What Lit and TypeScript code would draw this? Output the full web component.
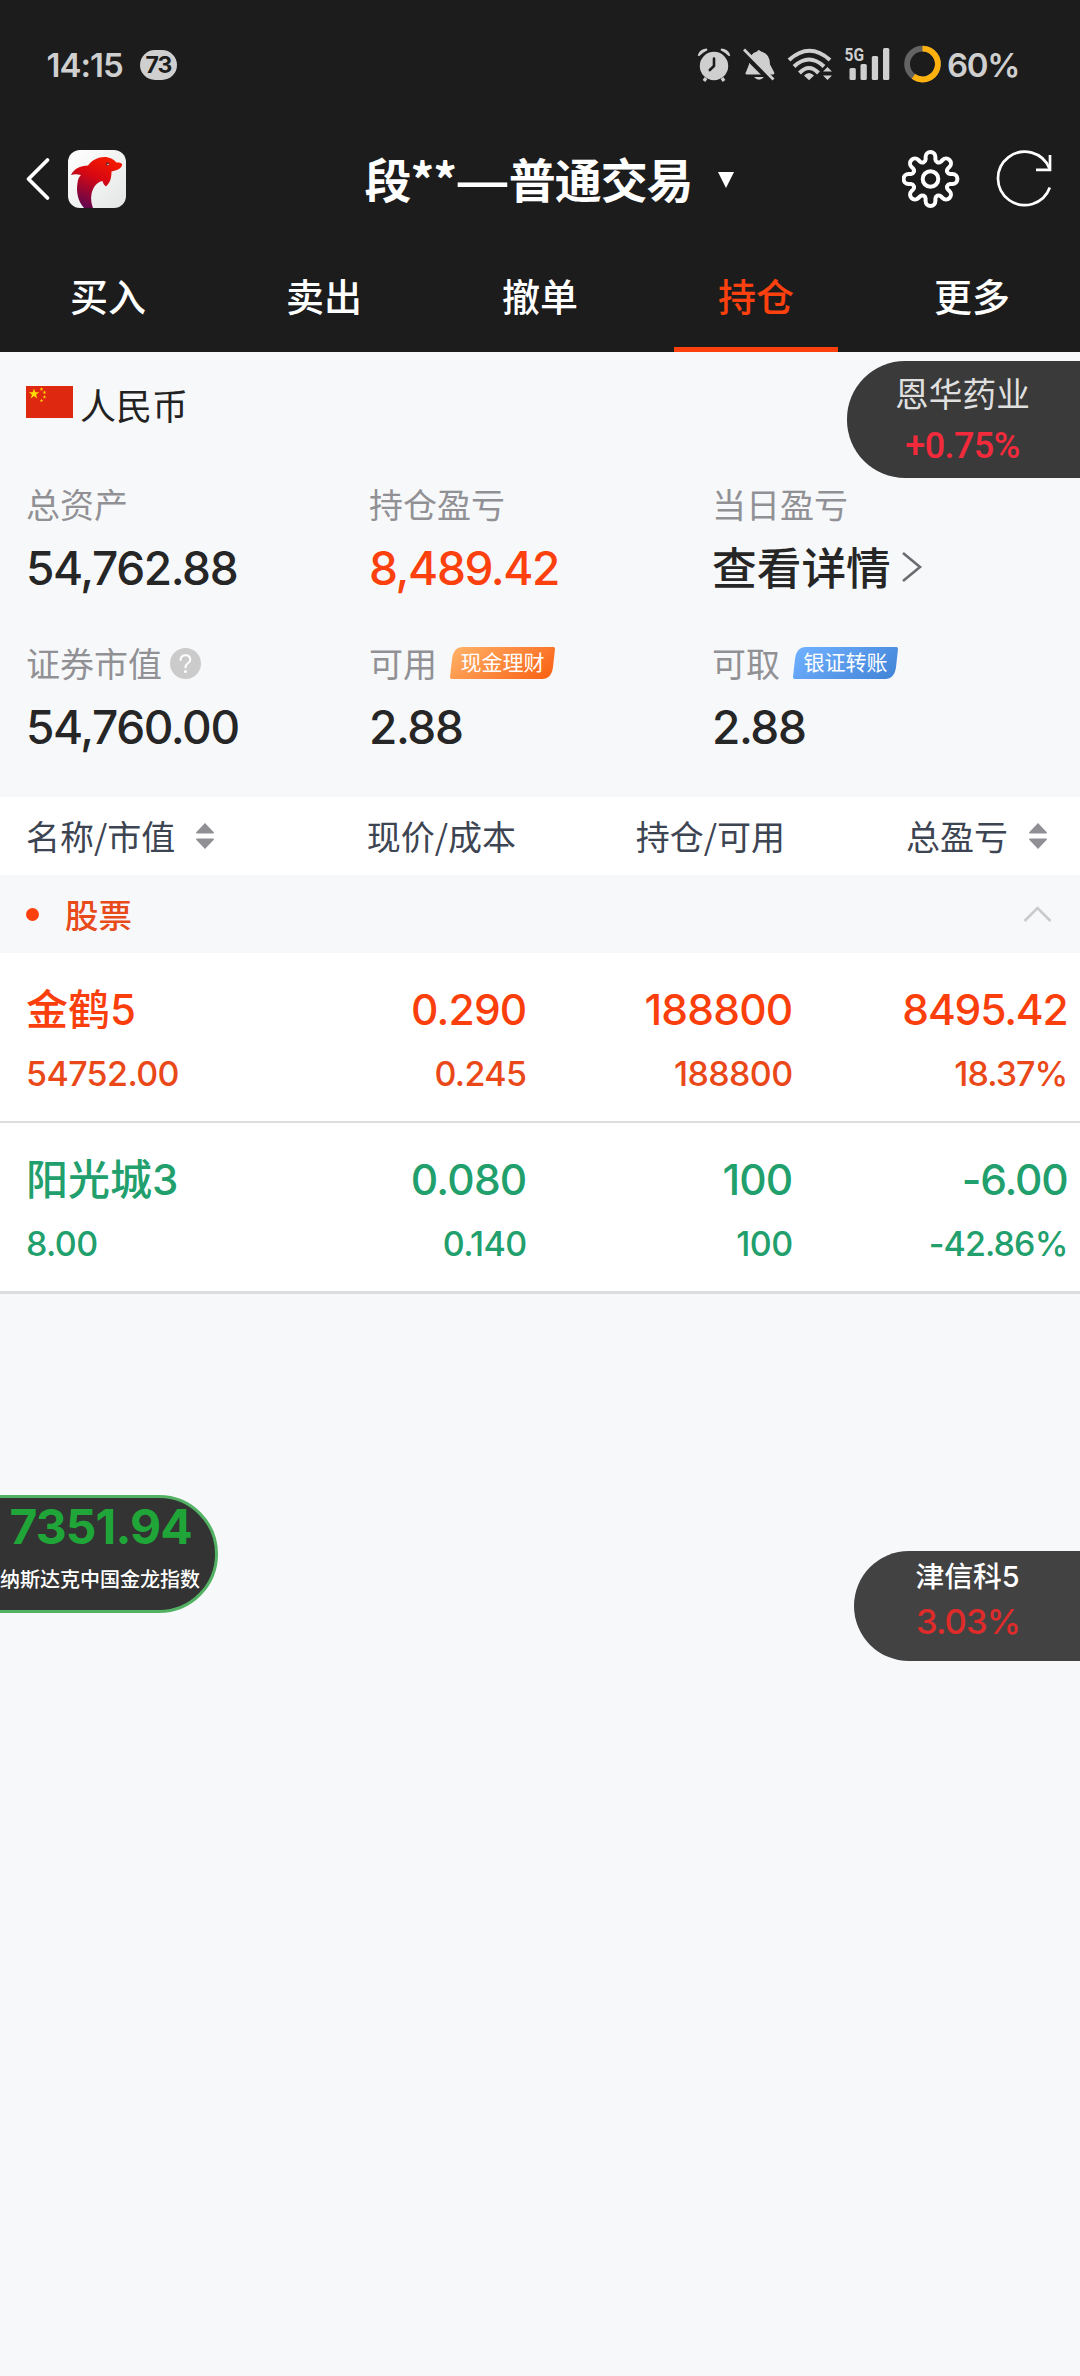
import { LitElement, html, css, svg } from "lit";
import { customElement, property } from "lit/decorators.js";
import { classMap } from "lit/directives/class-map.js";

interface Holding {
  tone: "up" | "down";
  name: string;
  value: string;
  cells: [string, string][];
}

const holdings: Holding[] = [
  { tone: "up", name: "金鹤5", value: "54752.00", cells: [["0.290", "0.245"], ["188800", "188800"], ["8495.42", "18.37%"]] },
  { tone: "down", name: "阳光城3", value: "8.00", cells: [["0.080", "0.140"], ["100", "100"], ["-6.00", "-42.86%"]] },
];

const tabs = ["买入", "卖出", "撤单", "持仓", "更多"];

/* Outline of an eight-lobed cog centred on (0, 0): rounded arms joined by concave valleys. */
function cogPath(half: number, base: number, shoulder: number): string {
  const at = (i: number, x: number, r: number) => {
    const a = (i * Math.PI) / 4;
    return `${(x * Math.cos(a) + r * Math.sin(a)).toFixed(2)} ${(x * Math.sin(a) - r * Math.cos(a)).toFixed(2)}`;
  };
  let d = `M${at(0, -half, base)}`;
  for (let i = 0; i < 8; i++) {
    d += `L${at(i, -half, shoulder)}A${half} ${half} 0 0 1 ${at(i, half, shoulder)}L${at(i, half, base)}A3.3 3.3 0 0 0 ${at(i + 1, -half, base)}`;
  }
  return `${d}Z`;
}

@customElement("status-bar")
export class StatusBar extends LitElement {
  static styles = css`
    :host { display: block; height: 130px; }
    .bar { display: flex; align-items: center; height: 130px; padding: 0 62px 0 46.5px; color: #cfcfcf;
      font: 600 33px/40px Inter, "Noto Sans", sans-serif; }
    .time { letter-spacing: -1px; width: 93.5px; white-space: nowrap; }
    .count { width: 37px; height: 30px; border-radius: 15px; background: #cfcfcf; color: #1c1c1c; text-align: center;
      font-size: 23px; line-height: 30px; font-weight: 700; letter-spacing: -1px; }
    .icons { margin-left: auto; width: 250px; height: 50px; flex: none; }
    .level { letter-spacing: -1.3px; width: 74px; box-sizing: border-box; padding-left: 3px; white-space: nowrap; }
  `;
  render() {
    return html`<div class="bar">
      <span class="time">14:15</span><span class="count">73</span>
      <svg class="icons" viewBox="694 40 250 50" fill="#cfcfcf">
        <circle cx="714" cy="66" r="14.2" />
        <path d="M714 58.500V66l-4.200 4" fill="none" stroke="#1c1c1c" stroke-width="2.600" stroke-linecap="round" />
        <path d="M706 78l-2 3M722 78l2 3" fill="none" stroke="#cfcfcf" stroke-width="3.200" />
        <path d="M698.500 55.500a9 9 0 0 1 8.500-6q-4 2-8.500 6zM729.500 55.500a9 9 0 0 0-8.500-6q4 2 8.500 6z" stroke="#cfcfcf" stroke-width="1.800" />
        <path d="M757 51.500q1.500-3 4 0q9 2 9 13l4 7.500q1 2.500-1 2.500h-26q-2.500 0-1-2.500l3-7.500q0-11 8-13z" />
        <path d="M754 77h10q-5 5.500-10 0z" />
        <path d="M742.500 52l30 30" stroke="#1c1c1c" stroke-width="6" />
        <path d="M744 49.500l29.500 30" stroke="#cfcfcf" stroke-width="2.800" />
        <g fill="none" stroke="#cfcfcf" stroke-width="4">
          <path d="M789 60q20.500-18.500 41 0" /><path d="M794 66.500q15-14 30 0" /><path d="M799.500 73q9.500-10 19 0" />
        </g>
        <path d="M804 75.500q5-5 10 0l-5 4.800z" />
        <path d="M823 71.500l4.500-4.500 4.500 4.500zM823 75.500l4.500 4.500 4.500-4.500z" />
        <rect x="849.500" y="68" width="6.300" height="12" rx="1.500" /><rect x="860.500" y="64" width="6.300" height="16" rx="1.500" />
        <rect x="871.800" y="56" width="6.300" height="24" rx="1.500" /><rect x="883" y="48" width="6.300" height="32" rx="1.500" />
        <text x="844.500" y="61" font-family="Roboto" font-weight="700" font-size="18.500" textLength="19.500" lengthAdjust="spacingAndGlyphs">5G</text>
        <circle cx="922.500" cy="64" r="15.400" fill="none" stroke="#636363" stroke-width="5.800" />
        <path d="M922.500 48.600A15.400 15.400 0 1 1 913.450 76.460" fill="none" stroke="#ffb20d" stroke-width="5.800" />
      </svg>
      <span class="level">60%</span>
    </div>`;
  }
}

@customElement("title-bar")
export class TitleBar extends LitElement {
  static styles = css`
    :host { display: block; height: 98px; }
    .bar { display: grid; grid-template-columns: 364.500px 1fr 178px; align-items: center; height: 98px; }
    .left { display: flex; align-items: center; padding-left: 22px; gap: 14px; }
    .back { width: 32px; height: 48px; }
    .logo { width: 58px; height: 58px; }
    .title { display: flex; align-items: center; color: #fff; white-space: nowrap; height: 64px; margin-bottom: 3px;
      font: 700 47px/64px "Noto Sans CJK SC", sans-serif; gap: 25px; }
    .name { letter-spacing: -1.100px; }
    .dash { display: inline-block; width: 53px; text-align: center; letter-spacing: 0; transform: scaleX(1.300); }
    .tri { width: 18px; height: 18px; margin-top: 4px; }
    .tools { width: 178px; height: 70px; }
  `;
  render() {
    return html`<div class="bar">
      <div class="left">
        <svg class="back" viewBox="0 0 32 48" fill="none" stroke="#fff" stroke-width="3.800" stroke-linecap="round" stroke-linejoin="round"><path d="M25.500 5L6.500 24L25.500 43" /></svg>
        <svg class="logo" viewBox="0 0 58 58">
          <defs>
            <linearGradient id="red" x1="0.700" y1="0" x2="0.250" y2="1"><stop offset="0" stop-color="#f51a00" /><stop offset="0.400" stop-color="#d80812" /><stop offset="1" stop-color="#5c0650" /></linearGradient>
            <linearGradient id="tile" x1="0" y1="0" x2="1" y2="1"><stop offset="0" stop-color="#fff" /><stop offset="1" stop-color="#e4e6e6" /></linearGradient>
          </defs>
          <rect width="58" height="58" rx="12" fill="url(#tile)" />
          <path fill="url(#red)" d="M3 25C6 19 12 15.500 20 15.500C25 9 33 6 40 7.500C45 8.500 47 11 48.500 12.500C52 12 55 13.500 54 15.500C53 18.500 49 20.500 43.500 21.500C43.500 28 42 33 38 36.500C36 35 35 33 34.500 31C29 32 25 37 23.500 44C22.500 49 23.500 54 25 58H16C10 51 8 42 9.500 33C10 29 11 27 13 25C9 24 6 24 3 25Z" />
          <circle cx="39.500" cy="14" r="1.800" fill="#742020" /><circle cx="40" cy="14.500" r="0.800" fill="#ddd" />
        </svg>
      </div>
      <div class="title"><span class="name">段**<span class="dash">—</span>普通交易</span><svg class="tri" viewBox="0 0 18 18"><path d="M1 1H17L9 17Z" fill="#fff" /></svg></div>
      <svg class="tools" viewBox="902 144 178 70" fill="none" stroke="#fff">
        <g transform="translate(930.500 179)" stroke-width="4"><path d=${cogPath(4.9, 19.5, 22)} stroke-linejoin="round" /><circle r="7.800" /></g>
        <g stroke-width="2.700"><path d="M1049.800 187.500A26.700 26.700 0 1 1 1049.500 168.500" /><path d="M1050 155V169.800H1036" /></g>
      </svg>
    </div>`;
  }
}

@customElement("trade-tabs")
export class TradeTabs extends LitElement {
  static styles = css`
    :host { display: block; }
    .tabs { display: grid; grid-template-columns: repeat(5, 1fr); height: 124px; }
    .tab { display: flex; flex-direction: column; align-items: center; justify-content: flex-end; color: #fff;
      font: 500 38px/56px "Noto Sans CJK SC", sans-serif; }
    .line { width: 164px; height: 5px; margin-top: 24.500px; }
    .active { color: #fc400e; }
    .active .line { background: #fc400e; }
  `;
  render() {
    return html`<div class="tabs">${tabs.map((t, i) => html`<div class=${classMap({ tab: true, active: i === 3 })}>${t}<span class="line"></span></div>`)}</div>`;
  }
}

@customElement("action-tag")
export class ActionTag extends LitElement {
  @property() tone = "orange";
  static styles = css`
    :host { display: block; height: 32px; }
    .tag { display: grid; width: 105px; height: 32px; justify-items: center; }
    .shape, .text { grid-area: 1 / 1; }
    .shape { width: 105px; height: 32px; }
    .text { color: #fff; font: 400 21px/30px "Noto Sans CJK SC", sans-serif; white-space: nowrap; height: 30px; margin-top: -1px; }
  `;
  render() {
    const blue = this.tone === "blue";
    return html`<div class="tag">
      <svg class="shape" viewBox="0 0 105 32">
        <defs><linearGradient id="g" x1="0" y1="0.300" x2="1" y2="0.700"><stop offset="0" stop-color=${blue ? "#6eaefe" : "#ffad62"} /><stop offset="1" stop-color=${blue ? "#4486d8" : "#fa6518"} /></linearGradient></defs>
        <path fill="url(#g)" d="M13 0H103.500Q105 0 105 2L103 20Q101.500 32 92 32H1.500Q0 32 0 30L2 12Q3.500 0 13 0Z" />
      </svg>
      <span class="text"><slot></slot></span>
    </div>`;
  }
}

@customElement("asset-summary")
export class AssetSummary extends LitElement {
  static styles = css`
    :host { display: block; height: 445px; }
    .currency { display: flex; align-items: center; gap: 7px; height: 52px; padding: 25.500px 0 0 26px; color: #222;
      font: 400 36px/52px "Noto Sans CJK SC", sans-serif; }
    .flag { width: 47px; height: 32px; margin-top: -3px; }
    .grid { display: grid; grid-template-columns: 343px 343px 1fr; padding: 48.500px 0 0 26px; row-gap: 43px; }
    .label { display: flex; align-items: center; height: 52px; color: #919195; white-space: nowrap;
      font: 400 34px/52px "Noto Sans CJK SC", sans-serif; }
    .value { display: flex; align-items: center; height: 64px; color: #262626; white-space: nowrap;
      font: 500 46px/64px Inter, "Noto Sans CJK SC", sans-serif; letter-spacing: -1.400px; padding-top: 12px; box-sizing: border-box; }
    .up { color: #fc400e; }
    .detail { font: 500 44.700px/64px "Noto Sans CJK SC", sans-serif; letter-spacing: 0; padding-top: 7px; }
    .help { width: 31px; height: 31px; margin-left: 8px; }
    .next { width: 24px; height: 34px; margin-left: 9px; margin-top: 2px; }
    .tag { margin-left: 13px; }
  `;
  render() {
    const star = "M0-5.500L1.300-1.700H5.200L2.100 0.600L3.200 4.500L0 2.100L-3.200 4.500L-2.100 0.600L-5.200-1.700H-1.300Z";
    return html`<div class="currency">
        <svg class="flag" viewBox="0 0 47 32"><rect width="47" height="32" fill="#de2910" /><g fill="#ffde00">
          <path transform="translate(8 8)" d=${star} />
          ${[[15.5, 3.2], [18.5, 6.4], [18.5, 11], [15.5, 14.5]].map(([x, y]) => svg`<path transform="translate(${x} ${y}) scale(0.350)" d=${star} />`)}
        </g></svg>
        <span>人民币</span>
      </div>
      <div class="grid">
        <div><div class="label">总资产</div><div class="value">54,762.88</div></div>
        <div><div class="label">持仓盈亏</div><div class="value up">8,489.42</div></div>
        <div><div class="label">当日盈亏</div><div class="value detail">查看详情<svg class="next" viewBox="0 0 24 34" fill="none" stroke="#6c6c70" stroke-width="2.600"><path d="M3 3L20 17L3 31" /></svg></div></div>
        <div><div class="label">证券市值<svg class="help" viewBox="0 0 31 31"><circle cx="15.500" cy="15.500" r="15.500" fill="#cbcbcb" /><path d="M10.500 12Q10.800 7.300 15.500 7.300Q20.300 7.300 20.300 11.800Q20.300 14 17.600 15.500Q15.500 16.800 15.500 19.500" fill="none" stroke="#fff" stroke-width="2" stroke-linecap="round" /><circle cx="15.500" cy="23.500" r="1.500" fill="#fff" /></svg></div><div class="value">54,760.00</div></div>
        <div><div class="label">可用<action-tag class="tag">现金理财</action-tag></div><div class="value">2.88</div></div>
        <div><div class="label">可取<action-tag class="tag" tone="blue">银证转账</action-tag></div><div class="value">2.88</div></div>
      </div>`;
  }
}

@customElement("holdings-table")
export class HoldingsTable extends LitElement {
  static styles = css`
    :host { display: block; }
    .head { display: grid; grid-template-columns: 340px 176px 269px 295px; align-items: center; height: 78px; background: #fff;
      color: #3d4452; font: 400 34px/52px "Noto Sans CJK SC", sans-serif; white-space: nowrap; }
    .h { display: flex; align-items: center; justify-content: flex-end; }
    .first { justify-content: flex-start; padding-left: 26px; }
    .last { padding-right: 32px; }
    .sort { width: 20px; height: 28px; margin-left: 20px; }
    .group { display: flex; align-items: center; height: 78px; padding: 0 28px 0 26px; color: #e84a1a;
      font: 500 33.500px/52px "Noto Sans CJK SC", sans-serif; }
    .dot { width: 13px; height: 13px; border-radius: 50%; background: #fc400e; margin-right: 26px; }
    .fold { width: 29px; height: 18px; margin-left: auto; }
    .row { display: grid; grid-template-columns: 300px 226.500px 266px 275px; height: 168px; border-bottom: 2px solid #dcdddf; background: #fff; }
    .end { border-bottom-width: 3px; }
    .cell { display: flex; flex-direction: column; align-items: flex-end; padding-top: 26px; white-space: nowrap; }
    .lead { align-items: flex-start; padding-left: 26px; }
    .big { font: 500 42.500px/62px Inter, "Noto Sans CJK SC", sans-serif; letter-spacing: -0.800px; height: 62px; }
    .name { font: 500 42px/62px Inter, "Noto Sans CJK SC", sans-serif; letter-spacing: 0; }
    .small { font: 500 34px/50px Inter, "Noto Sans CJK SC", sans-serif; letter-spacing: -0.600px; margin-top: 7.500px; }
    .cell:last-child .big { letter-spacing: -1.200px; }
    .cell:last-child .small { letter-spacing: -0.900px; }
    .up { color: #fa3e0c; } .up .small { color: #ea4818; }
    .down { color: #219f6c; }
  `;
  private sort() {
    return html`<svg class="sort" viewBox="0 0 20 28" fill="#8f8f94"><path d="M10 1L19 10.500Q19 11.500 18 11.500H2Q1 11.500 1 10.500ZM10 27L19 17.500Q19 16.500 18 16.500H2Q1 16.500 1 17.500Z" /></svg>`;
  }
  render() {
    return html`<div class="head">
        <div class="h first">名称/市值${this.sort()}</div><div class="h">现价/成本</div><div class="h">持仓/可用</div><div class="h last">总盈亏${this.sort()}</div>
      </div>
      <div class="group"><span class="dot"></span><span>股票</span><svg class="fold" viewBox="0 0 29 18" fill="none" stroke="#cacaca" stroke-width="2.600"><path d="M1.500 16L14.500 3L27.500 16" /></svg></div>
      ${holdings.map((h, i) => html`<div class="row ${h.tone} ${i === holdings.length - 1 ? "end" : ""}">
        <div class="cell lead"><span class="big name">${h.name}</span><span class="small">${h.value}</span></div>
        ${h.cells.map(([a, b]) => html`<div class="cell"><span class="big">${a}</span><span class="small">${b}</span></div>`)}
      </div>`)}`;
  }
}

@customElement("app-root")
export class AppRoot extends LitElement {
  static styles = css`
    :host { display: block; position: relative; width: 1080px; height: 2376px; overflow: hidden; background: #f7f8fa; }
    .top { background: #1c1c1c; }
    .float { position: absolute; box-sizing: border-box; display: flex; flex-direction: column; align-items: center; white-space: nowrap; }
    .enhua { left: 847px; top: 361px; width: 233px; height: 117px; border-radius: 58px 0 0 58px; background: #3a3a3a;
      padding: 7px 2px 0 0; color: #dfdfdf; font: 400 33.700px/50px "Noto Sans CJK SC", sans-serif; }
    .enhua .num { font: 500 36px/50px Roboto, sans-serif; color: #f22a3c; letter-spacing: -0.600px; margin-top: 2.500px; }
    .index { left: -3px; top: 1495px; width: 221px; height: 118px; border: 3px solid #52b163; border-radius: 0 59px 59px 0; background: #323332;
      padding: 1px 0 0 0; color: #fff; font: 500 20px/30px "Noto Sans CJK SC", sans-serif; align-items: flex-start; }
    .index .num { font: 700 48px/56px Inter, sans-serif; color: #20a638; letter-spacing: -0.900px; padding-left: 9.500px; margin-bottom: 8.500px; }
    .jinxin { left: 854px; top: 1551px; width: 226px; height: 110px; border-radius: 55px 0 0 55px; background: #424242;
      padding: 5px 0 0 1px; color: #fff; font: 500 28.800px/42px Inter, "Noto Sans CJK SC", sans-serif; }
    .jinxin .num { font: 500 34.500px/48px Inter, sans-serif; color: #e02b2b; letter-spacing: -0.900px; padding-left: 1px; }
  `;
  render() {
    return html`<div class="top"><status-bar></status-bar><title-bar></title-bar><trade-tabs></trade-tabs></div>
      <asset-summary></asset-summary>
      <holdings-table></holdings-table>
      <div class="float enhua"><span>恩华药业</span><span class="num">+0.75%</span></div>
      <div class="float index"><span class="num">7351.94</span><span>纳斯达克中国金龙指数</span></div>
      <div class="float jinxin"><span>津信科5</span><span class="num">3.03%</span></div>`;
  }
}
